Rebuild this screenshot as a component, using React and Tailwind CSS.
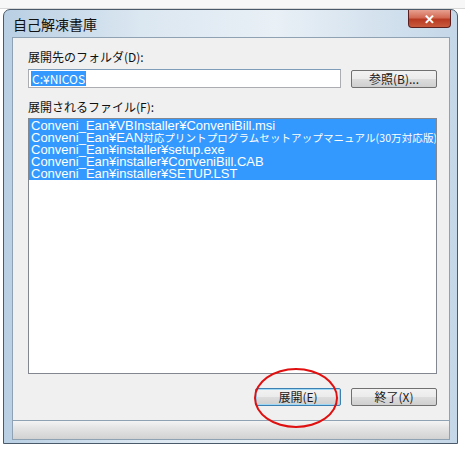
import React from 'react';

const font = { fontFamily: '"Noto Sans CJK JP", "Liberation Sans", sans-serif' };

const files = [
  ['Conveni_Ean¥VBInstaller¥ConveniBill.msi'],
  ['Conveni_Ean¥EAN', '対応プリントプログラムセットアップマニュアル(30万対応版)', '.pdf'],
  ['Conveni_Ean¥installer¥setup.exe'],
  ['Conveni_Ean¥installer¥ConveniBill.CAB'],
  ['Conveni_Ean¥installer¥SETUP.LST'],
];

const Btn = ({ children, focused }) => (
  <div
    className={`w-[86px] h-[18px] flex items-center justify-center text-[12px] leading-none text-[#1a1a1a] rounded-[2px] border ${
      focused ? 'border-[#3c7fb1] shadow-[inset_0_0_0_1px_#9ed8f4]' : 'border-[#707070]'
    } bg-[linear-gradient(#f2f2f2_0%,#ebebeb_50%,#dddddd_51%,#cfcfcf_100%)]`}
  >
    {children}
  </div>
);

export default function App() {
  return (
    <div className="w-[465px] h-[455px] bg-white relative overflow-hidden" style={font}>
      {/* desktop behind */}
      <div className="h-[9px] border-b border-[#d8d8d8] bg-[#f7f7f7]" />

      {/* window */}
      <div className="ml-[3px] w-[455px] h-[435px] rounded-t-[7px] border border-[#4a5a6a] bg-[linear-gradient(90deg,#b9cfe3_0%,#dbe7f1_30%,#e9f0f6_60%,#c4d7e8_100%)] flex flex-col">
        {/* title bar */}
        <div className="h-[27px] flex items-start justify-between pl-[9px] pr-[6px]">
          <span className="text-[14px] leading-none mt-[7px] text-[#111]">自己解凍書庫</span>
          <div className="w-[43px] h-[18px] rounded-b-[4px] border border-[#5a2020] border-t-0 bg-[linear-gradient(#e8a090_0%,#d26a55_45%,#b83a22_55%,#c85a3e_100%)] flex items-center justify-center text-white text-[13px] font-bold leading-none">
            ✕
          </div>
        </div>

        {/* client area */}
        <div className="ml-[8px] w-[438px] h-[384px] border border-[#8ea2b4] bg-[#f0f0f0] pl-[15px] pr-[12px] pt-[12px] flex flex-col">
          <div className="text-[12px] leading-[14px] text-[#111]">展開先のフォルダ(D):</div>
          <div className="flex items-center gap-[10px] mt-[5px]">
            <div className="w-[313px] h-[19px] bg-white border border-[#abadb3] border-t-[#7f9db9] flex items-center pl-[2px]">
              <span className="bg-[#3399ff] text-white text-[12px] leading-[15px] px-[1px]">C:¥NICOS</span>
            </div>
            <Btn>参照(B)...</Btn>
          </div>
          <div className="text-[12px] leading-[14px] text-[#111] mt-[12px]">展開されるファイル(F):</div>
          <div className="mt-[4px] w-[409px] h-[256px] bg-white border border-[#828790] overflow-hidden">
            <div className="bg-[#3399ff] pt-[1px] h-[61px]">
              {files.map(([a, jp, b]) => (
                <div
                  key={a + (jp || '')}
                  className="h-[12px] text-white text-[13px] leading-[12px] whitespace-nowrap pl-[2px]"
                  style={{ fontFamily: '"Liberation Sans", "Noto Sans CJK JP", sans-serif' }}
                >
                  {a}
                  {jp && (
                    <span className="text-[10.5px] tracking-[0.1px]" style={{ fontFamily: '"Noto Sans CJK JP", sans-serif' }}>
                      {jp}
                    </span>
                  )}
                  {b}
                </div>
              ))}
            </div>
          </div>
          <div className="flex justify-end gap-[10px] mt-[14px]">
            <Btn focused>展開(E)</Btn>
            <Btn>終了(X)</Btn>
          </div>
        </div>

        {/* bottom strip */}
        <div className="ml-[8px] w-[438px] h-[19px] border-x border-b border-[#8ea2b4] bg-[linear-gradient(#f4f4f4_0%,#e4e4e4_40%,#d2d2d2_100%)]" />
      </div>

      {/* red annotation ellipse */}
      <div className="absolute left-[254px] top-[368px] w-[84px] h-[60px] rounded-[50%] border-2 border-[#e01010]" />
    </div>
  );
}
